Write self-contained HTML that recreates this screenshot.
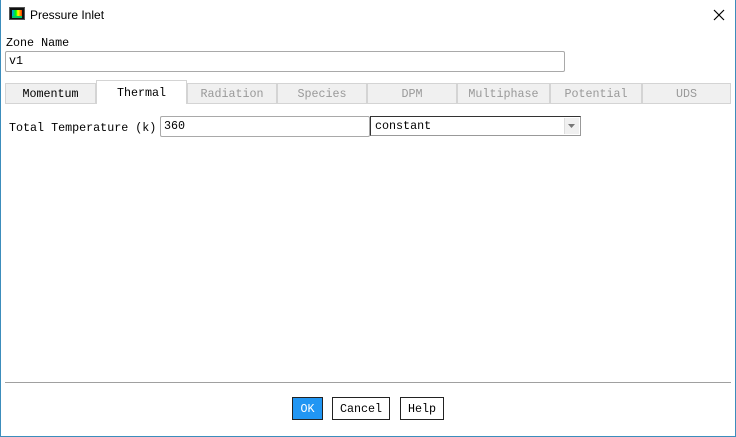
<!DOCTYPE html>
<html><head><meta charset="utf-8"><style>
*{margin:0;padding:0;box-sizing:border-box}
body{width:736px;height:437px;background:#fff;position:relative;overflow:hidden;font-family:"Liberation Mono",monospace;font-size:11.7px;color:#000}
.win{position:absolute;left:0;top:0;width:736px;height:437px;border:1px solid #3c8dbc;border-top:none}
.a{position:absolute}
.title{left:30px;top:8px;font-family:"Liberation Sans",sans-serif;font-size:12px}
.tab{position:absolute;top:83px;height:21px;background:#f0f0f0;border:1px solid #d4d4d4;color:#999;text-align:center;line-height:20px}
.inp{position:absolute;border:1px solid #a9a9a9;border-radius:2px;background:#fff;padding-left:3px;line-height:19px}
.btn{position:absolute;top:397px;height:23px;border:1px solid #222;background:#fff;text-align:center;line-height:22px}
</style></head><body>
<div class="win"></div>
<div class="a" style="left:9px;top:7px;width:16px;height:13px;background:#111;border:1px solid #555">
<div class="a" style="left:2px;top:2px;width:10px;height:6px;background:linear-gradient(90deg,#09f,#0f0 40%,#ff0 60%,#f30)"></div>
<div class="a" style="left:2px;top:8px;width:10px;height:2px;background:#0c6"></div></div>
<div class="a title">Pressure Inlet</div>
<svg class="a" style="left:713px;top:9px" width="12" height="12"><path d="M1 1L11 11M11 1L1 11" stroke="#000" stroke-width="1.2"/></svg>
<div class="a" style="left:6px;top:36px">Zone Name</div>
<div class="inp" style="left:5px;top:51px;width:560px;height:21px">v1</div>
<div class="tab" style="left:5px;width:91px;color:#000">Momentum</div>
<div class="tab" style="left:96px;top:80px;width:91px;height:24px;background:#fff;color:#000;border-bottom:none;line-height:25px">Thermal</div>
<div class="tab" style="left:187px;width:90px">Radiation</div>
<div class="tab" style="left:277px;width:90px">Species</div>
<div class="tab" style="left:367px;width:90px">DPM</div>
<div class="tab" style="left:457px;width:93px">Multiphase</div>
<div class="tab" style="left:550px;width:92px">Potential</div>
<div class="tab" style="left:642px;width:89px">UDS</div>
<div class="a" style="left:9px;top:121px">Total Temperature (k)</div>
<div class="inp" style="left:160px;top:116px;width:210px;height:21px">360</div>
<div class="a" style="left:370px;top:116px;width:211px;height:20px;border:1px solid #333;border-right-color:#999;border-bottom-color:#999;padding-left:4px;line-height:19px">constant
<div class="a" style="right:1px;top:1px;width:15px;height:16px;background:#f0f0f0;border-left:1px solid #ddd"></div>
<svg class="a" style="right:5px;top:7px" width="7" height="4"><path d="M0 0H7L3.5 4Z" fill="#777"/></svg></div>
<div class="a" style="left:5px;top:382px;width:726px;height:1px;background:#a0a0a0"></div>
<div class="btn" style="left:292px;width:31px;background:#2196f3;color:#fff">OK</div>
<div class="btn" style="left:332px;width:58px">Cancel</div>
<div class="btn" style="left:400px;width:44px">Help</div>
</body></html>
